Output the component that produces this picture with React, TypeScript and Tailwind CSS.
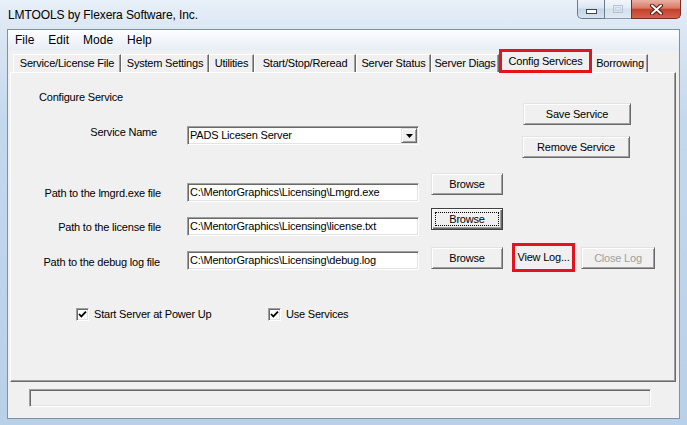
import React from "react";

const raised =
  "border border-t-[#e3e3e3] border-l-[#e3e3e3] border-r-[#696969] border-b-[#696969] shadow-[inset_1px_1px_0_#ffffff,inset_-1px_-1px_0_#a0a0a0] bg-[#f0f0f0]";
const sunken =
  "border border-t-[#a0a0a0] border-l-[#a0a0a0] border-r-[#ffffff] border-b-[#ffffff] shadow-[inset_1px_1px_0_#696969,inset_-1px_-1px_0_#e3e3e3]";

function Btn({ label, className = "" }: { label: string; className?: string }) {
  return (
    <div className={`${raised} flex shrink-0 items-center justify-center text-[11px] leading-[13px] text-black ${className}`}>
      {label}
    </div>
  );
}

function Field({ value, className = "" }: { value: string; className?: string }) {
  return (
    <div className={`${sunken} flex h-[19px] w-[232px] shrink-0 items-center bg-white pl-[2px] text-[11px] leading-[13px] text-black ${className}`}>
      {value}
    </div>
  );
}

function Check({ label }: { label: string }) {
  return (
    <div className="flex items-center">
      <div className={`${sunken} flex h-[13px] w-[13px] items-center justify-center bg-white`}>
        <svg width="9" height="9" viewBox="0 0 9 9">
          <path d="M1 4 L3.3 6.4 L8 1.6" fill="none" stroke="#000" strokeWidth="1.8" />
        </svg>
      </div>
      <span className="ml-[5px] text-[11px] leading-[13px] text-black">{label}</span>
    </div>
  );
}

const tabs: { label: string; w: string; selected?: boolean }[] = [
  { label: "Service/License File", w: "w-[108px]" },
  { label: "System Settings", w: "w-[88px]" },
  { label: "Utilities", w: "w-[45px]" },
  { label: "Start/Stop/Reread", w: "w-[102px]" },
  { label: "Server Status", w: "w-[75px]" },
  { label: "Server Diags", w: "w-[68px]" },
  { label: "Config Services", w: "w-[93px]", selected: true },
  { label: "Borrowing", w: "w-[56px]" },
];

export default function App() {
  return (
    <div className="flex h-[425px] w-[687px] flex-col overflow-hidden bg-[linear-gradient(to_bottom,#e8f0f9_0px,#dce7f3_28px,#c4d8ed_120px,#b9d0e9_100%)] font-['Liberation_Sans',Arial,sans-serif] tracking-[-0.2px]">
      {/* Title bar */}
      <div className="flex h-[29px] shrink-0 items-start">
        <div className="pl-[8px] pt-[8px] text-[12px] leading-[15px] tracking-[-0.1px] text-black">LMTOOLS by Flexera Software, Inc.</div>
        <div className="ml-auto mr-[6px] flex h-[19px]">
          <div className="flex w-[28px] items-center justify-center rounded-bl-[5px] border border-t-0 border-[#6b7b90] bg-[linear-gradient(to_bottom,#eef3f9_0%,#dbe5f0_45%,#c6d3e3_50%,#d6e2ef_100%)]">
            <svg width="11" height="5" viewBox="0 0 11 5" className="mt-[5px]">
              <rect x="0.5" y="0.5" width="10" height="4" fill="#ffffff" stroke="#3b4654" />
            </svg>
          </div>
          <div className="flex w-[26px] items-center justify-center border-b border-[#8c9cb0] bg-[linear-gradient(to_bottom,#f2f6fb_0%,#e3ebf4_45%,#d6e0ec_50%,#e0e9f3_100%)]">
            <svg width="10" height="8" viewBox="0 0 10 8">
              <rect x="0.5" y="0.5" width="9" height="7" fill="none" stroke="#b5c2d2" />
              <rect x="2.5" y="2.5" width="5" height="3" fill="none" stroke="#c9d3df" />
            </svg>
          </div>
          <div className="flex w-[50px] items-center justify-center rounded-br-[5px] border border-t-0 border-[#7a2b22] bg-[linear-gradient(to_bottom,#eab1a4_0%,#d97a66_45%,#c4402d_52%,#d2634c_100%)]">
            <svg width="13" height="11" viewBox="0 0 13 11">
              <path d="M2 1.5 L11 9.5 M11 1.5 L2 9.5" stroke="#4a1a14" strokeWidth="4" strokeLinecap="round" />
              <path d="M2 1.5 L11 9.5 M11 1.5 L2 9.5" stroke="#ffffff" strokeWidth="2" strokeLinecap="round" />
            </svg>
          </div>
        </div>
      </div>

      {/* Client area */}
      <div className="mx-[7px] flex h-[390px] shrink-0 flex-col border border-[#7f91a8] bg-[#f0f0f0]">
        {/* Menu bar */}
        <div className="flex h-[20px] shrink-0 items-center bg-[linear-gradient(to_bottom,#fdfeff,#e8eef6)] text-[12px] leading-[15px] tracking-normal text-black">
          <span className="px-[7px]">File</span>
          <span className="px-[7px]">Edit</span>
          <span className="px-[7px]">Mode</span>
          <span className="px-[7px]">Help</span>
        </div>

        {/* Tabs */}
        <div className="flex h-[22px] shrink-0 items-end pl-[5px]">
          {tabs.map((t) =>
            t.selected ? (
              <div
                key={t.label}
                className={`relative z-10 -mb-px flex h-[23px] ${t.w} shrink-0 items-center justify-center border-l border-r border-t border-l-white border-r-[#696969] border-t-white bg-[#f0f0f0] pb-[1px] text-[11px] leading-[13px] text-black shadow-[inset_-1px_0_0_#a0a0a0]`}
              >
                {t.label}
                <div className="absolute -left-px -right-px -top-[2px] bottom-0 border-[3px] border-[#e3141c]" />
              </div>
            ) : (
              <div
                key={t.label}
                className={`flex h-[18px] ${t.w} shrink-0 items-center justify-center border-l border-r border-t border-l-white border-r-[#696969] border-t-white bg-[#f0f0f0] text-[11px] leading-[13px] text-black shadow-[inset_-1px_0_0_#a0a0a0]`}
              >
                {t.label}
              </div>
            )
          )}
        </div>

        {/* Panel */}
        <div className="ml-[2px] mr-[3px] flex h-[310px] shrink-0 flex-col border border-b-[#696969] border-l-white border-r-[#696969] border-t-white text-[11px] leading-[13px] text-black shadow-[inset_-1px_-1px_0_#a0a0a0]">
          {/* Band 1 */}
          <div className="flex h-[52px] shrink-0 items-start">
            <div className="w-[512px] shrink-0 pl-[28px] pt-[18px]">Configure Service</div>
            <Btn label="Save Service" className="mt-[30px] h-[22px] w-[108px]" />
          </div>

          {/* Band 2 */}
          <div className="flex h-[35px] shrink-0 items-start">
            <div className="w-[176px] shrink-0 pr-[30px] pt-[1px] text-right">Service Name</div>
            <div className={`${sunken} mt-[1px] flex h-[19px] w-[232px] shrink-0 items-center bg-white pl-[2px]`}>
              <span className="flex-1">PADS Licesen Server</span>
              <div className={`${raised} mr-[1px] flex h-[15px] w-[16px] items-center justify-center`}>
                <svg width="7" height="4" viewBox="0 0 7 4">
                  <path d="M0 0 H7 L3.5 4 Z" fill="#000" />
                </svg>
              </div>
            </div>
            <Btn label="Remove Service" className="ml-[103px] mt-[11px] h-[22px] w-[108px]" />
          </div>

          {/* Band 3 */}
          <div className="flex h-[45px] shrink-0 items-start">
            <div className="w-[176px] shrink-0 pr-[26px] pt-[27px] text-right">Path to the lmgrd.exe file</div>
            <Field value="C:\MentorGraphics\Licensing\Lmgrd.exe" className="mt-[23px]" />
            <Btn label="Browse" className="ml-[12px] mt-[13px] h-[22px] w-[72px]" />
          </div>

          {/* Band 4 */}
          <div className="flex h-[35px] shrink-0 items-start">
            <div className="w-[176px] shrink-0 pr-[26px] pt-[16px] text-right">Path to the license file</div>
            <Field value="C:\MentorGraphics\Licensing\license.txt" className="mt-[12px]" />
            <div className="ml-[12px] mt-[3px] flex h-[22px] w-[72px] shrink-0 items-center justify-center border border-[#404040] bg-[#f0f0f0] shadow-[inset_1px_1px_0_#ffffff,inset_-1px_-1px_0_#696969,inset_-2px_-2px_0_#a0a0a0]">
              <div className="flex h-[14px] w-[64px] items-center justify-center border border-dotted border-black">Browse</div>
            </div>
          </div>

          {/* Band 5 */}
          <div className="flex h-[40px] shrink-0 items-start">
            <div className="w-[176px] shrink-0 pr-[27px] pt-[16px] text-right">Path to the debug log file</div>
            <Field value="C:\MentorGraphics\Licensing\debug.log" className="mt-[11px]" />
            <Btn label="Browse" className="ml-[12px] mt-[7px] h-[22px] w-[72px]" />
            <div className="ml-[9px] mt-[3px] flex h-[29px] w-[63px] shrink-0 items-center justify-center border-[3px] border-[#e3141c] bg-[#f0f0f0]">
              View Log...
            </div>
            <div className={`${raised} ml-[6px] mt-[7px] flex h-[22px] w-[74px] shrink-0 items-center justify-center text-[#a0a0a0]`}>
              Close Log
            </div>
          </div>

          {/* Band 6 */}
          <div className="ml-[65px] mt-[28px] flex items-center">
            <div className="w-[192px] shrink-0">
              <Check label="Start Server at Power Up" />
            </div>
            <Check label="Use Services" />
          </div>
        </div>

        {/* Status bar field */}
        <div className={`${sunken} ml-[21px] mt-[7px] h-[18px] w-[622px] shrink-0 bg-[#f0f0f0]`} />
      </div>
    </div>
  );
}
